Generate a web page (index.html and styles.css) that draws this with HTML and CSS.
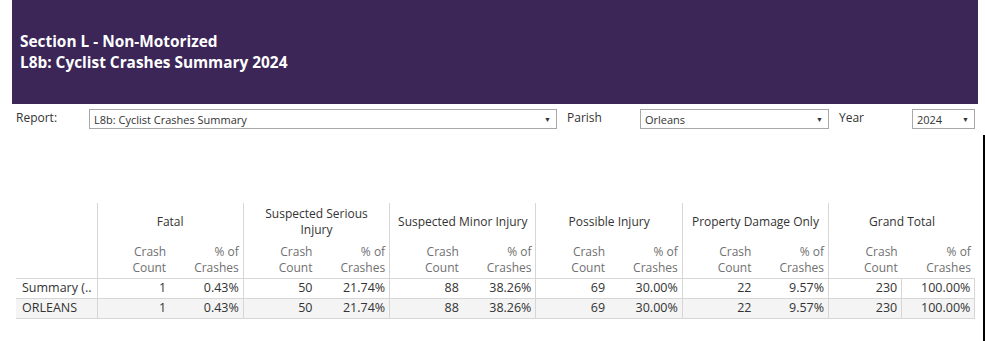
FILE: index.html
```html
<!DOCTYPE html>
<html lang="en">
<head>
<meta charset="utf-8">
<title>L8b: Cyclist Crashes Summary 2024</title>
<link rel="stylesheet" href="styles.css">
</head>
<body>
<header class="banner">
  <h1 class="banner-title">Section L - Non-Motorized<br>L8b: Cyclist Crashes Summary 2024</h1>
</header>

<div class="filters">
  <label class="filter-label filter-label-report">Report:</label>
  <div class="dropdown dropdown-report"><span>L8b: Cyclist Crashes Summary</span><span class="caret">&#9660;</span></div>
  <label class="filter-label filter-label-parish">Parish</label>
  <div class="dropdown dropdown-parish"><span>Orleans</span><span class="caret">&#9660;</span></div>
  <label class="filter-label filter-label-year">Year</label>
  <div class="dropdown dropdown-year"><span>2024</span><span class="caret">&#9660;</span></div>
</div>

<section class="sheet">
  <div class="sheet-body">
    <table class="crosstab">
      <colgroup>
        <col class="col-row-head">
        <col><col><col><col><col><col><col><col><col><col><col><col>
      </colgroup>
      <thead>
        <tr class="group-row">
          <th class="corner" rowspan="2"></th>
          <th class="group" colspan="2">Fatal</th>
          <th class="group" colspan="2">Suspected Serious<br>Injury</th>
          <th class="group" colspan="2">Suspected Minor Injury</th>
          <th class="group" colspan="2">Possible Injury</th>
          <th class="group" colspan="2">Property Damage Only</th>
          <th class="group" colspan="2">Grand Total</th>
        </tr>
        <tr class="measure-row">
          <th class="measure first">Crash<br>Count</th><th class="measure">% of<br>Crashes</th>
          <th class="measure first">Crash<br>Count</th><th class="measure">% of<br>Crashes</th>
          <th class="measure first">Crash<br>Count</th><th class="measure">% of<br>Crashes</th>
          <th class="measure first">Crash<br>Count</th><th class="measure">% of<br>Crashes</th>
          <th class="measure first">Crash<br>Count</th><th class="measure">% of<br>Crashes</th>
          <th class="measure first">Crash<br>Count</th><th class="measure">% of<br>Crashes</th>
        </tr>
      </thead>
      <tbody>
        <tr>
          <th class="row-head">Summary (..</th>
          <td class="first">1</td><td>0.43%</td>
          <td class="first">50</td><td>21.74%</td>
          <td class="first">88</td><td>38.26%</td>
          <td class="first">69</td><td>30.00%</td>
          <td class="first">22</td><td>9.57%</td>
          <td class="first">230</td><td class="total-pct">100.00%</td>
        </tr>
        <tr class="alt">
          <th class="row-head">ORLEANS</th>
          <td class="first">1</td><td>0.43%</td>
          <td class="first">50</td><td>21.74%</td>
          <td class="first">88</td><td>38.26%</td>
          <td class="first">69</td><td>30.00%</td>
          <td class="first">22</td><td>9.57%</td>
          <td class="first">230</td><td class="total-pct">100.00%</td>
        </tr>
      </tbody>
    </table>
  </div>
  <div class="sheet-edge"></div>
</section>
</body>
</html>
```

FILE: styles.css
```css
* {
  box-sizing: border-box;
}

html, body {
  margin: 0;
  padding: 0;
  background: #ffffff;
}

body {
  width: 985px;
  height: 341px;
  overflow: hidden;
  font-family: "Open Sans", "Noto Sans", "Liberation Sans", sans-serif;
  color: #333333;
}

/* Purple title banner */
.banner {
  margin-left: 12px;
  width: 966px;
  height: 104px;
  background: #3b2657;
  padding: 31px 0 0 8px;
}

.banner-title {
  margin: 0;
  color: #ffffff;
  font-size: 15.4px;
  font-weight: 700;
  line-height: 21px;
  letter-spacing: 0;
}

/* Filter controls row */
.filters {
  display: flex;
  align-items: center;
  height: 20px;
  margin-top: 5px;
  padding-left: 16px;
}

.filter-label {
  font-size: 12px;
  color: #333333;
  line-height: 20px;
  position: relative;
  top: -1px;
}

.filter-label-report {
  width: 73px;
}

.filter-label-parish {
  width: 73px;
  margin-left: 10px;
}

.filter-label-year {
  width: 73px;
  margin-left: 10px;
}

.dropdown {
  display: flex;
  align-items: center;
  justify-content: space-between;
  height: 20px;
  border: 1px solid #a8a8a8;
  background: #ffffff;
  padding: 0 5px 0 4px;
  font-size: 11px;
  color: #333333;
}

.dropdown-report {
  width: 468px;
}

.dropdown-parish {
  width: 189px;
}

.dropdown-year {
  width: 63px;
}

.caret {
  font-size: 7px;
  color: #333333;
}

/* Worksheet area with its right-hand frame */
.sheet {
  display: flex;
  margin-top: 6px;
  height: 206px;
}

.sheet-body {
  width: 983px;
  padding: 68px 0 0 16px;
}

.sheet-edge {
  width: 2px;
  background: #000000;
}

/* Crosstab */
.crosstab {
  border-collapse: collapse;
  table-layout: fixed;
  width: 959px;
  font-size: 12px;
}

.crosstab col {
  width: 73.17px;
}

.crosstab col.col-row-head {
  width: 81px;
}

.crosstab th,
.crosstab td {
  padding: 0;
  font-weight: 400;
}

.corner {
  border-right: 1px solid #d6d6d6;
}

.group-row th.group {
  height: 37px;
  text-align: center;
  vertical-align: middle;
  color: #333333;
  line-height: 16px;
  font-size: 12px;
  border-left: 1px solid #d6d6d6;
  padding-top: 1px;
}

.measure-row th.measure {
  height: 38px;
  text-align: right;
  vertical-align: middle;
  color: #707070;
  line-height: 16px;
  padding-right: 4px;
  padding-top: 2px;
}

.measure-row th.first {
  border-left: 1px solid #d6d6d6;
}

.crosstab tbody tr {
  height: 20px;
}

.crosstab tbody th,
.crosstab tbody td {
  border-top: 1px solid #d6d6d6;
  border-bottom: 1px solid #d6d6d6;
  line-height: 18px;
  font-size: 12.5px;
}

.crosstab tbody td {
  text-align: right;
  padding-right: 4px;
}

.crosstab tbody td.first {
  border-left: 1px solid #d6d6d6;
}

.crosstab tbody td.total-pct {
  border-left: 1px solid #d6d6d6;
  border-right: 1px solid #d6d6d6;
}

.row-head {
  text-align: left;
  padding-left: 6px !important;
  color: #333333;
}

.crosstab tbody tr.alt th,
.crosstab tbody tr.alt td {
  background: #f4f4f4;
}
```
